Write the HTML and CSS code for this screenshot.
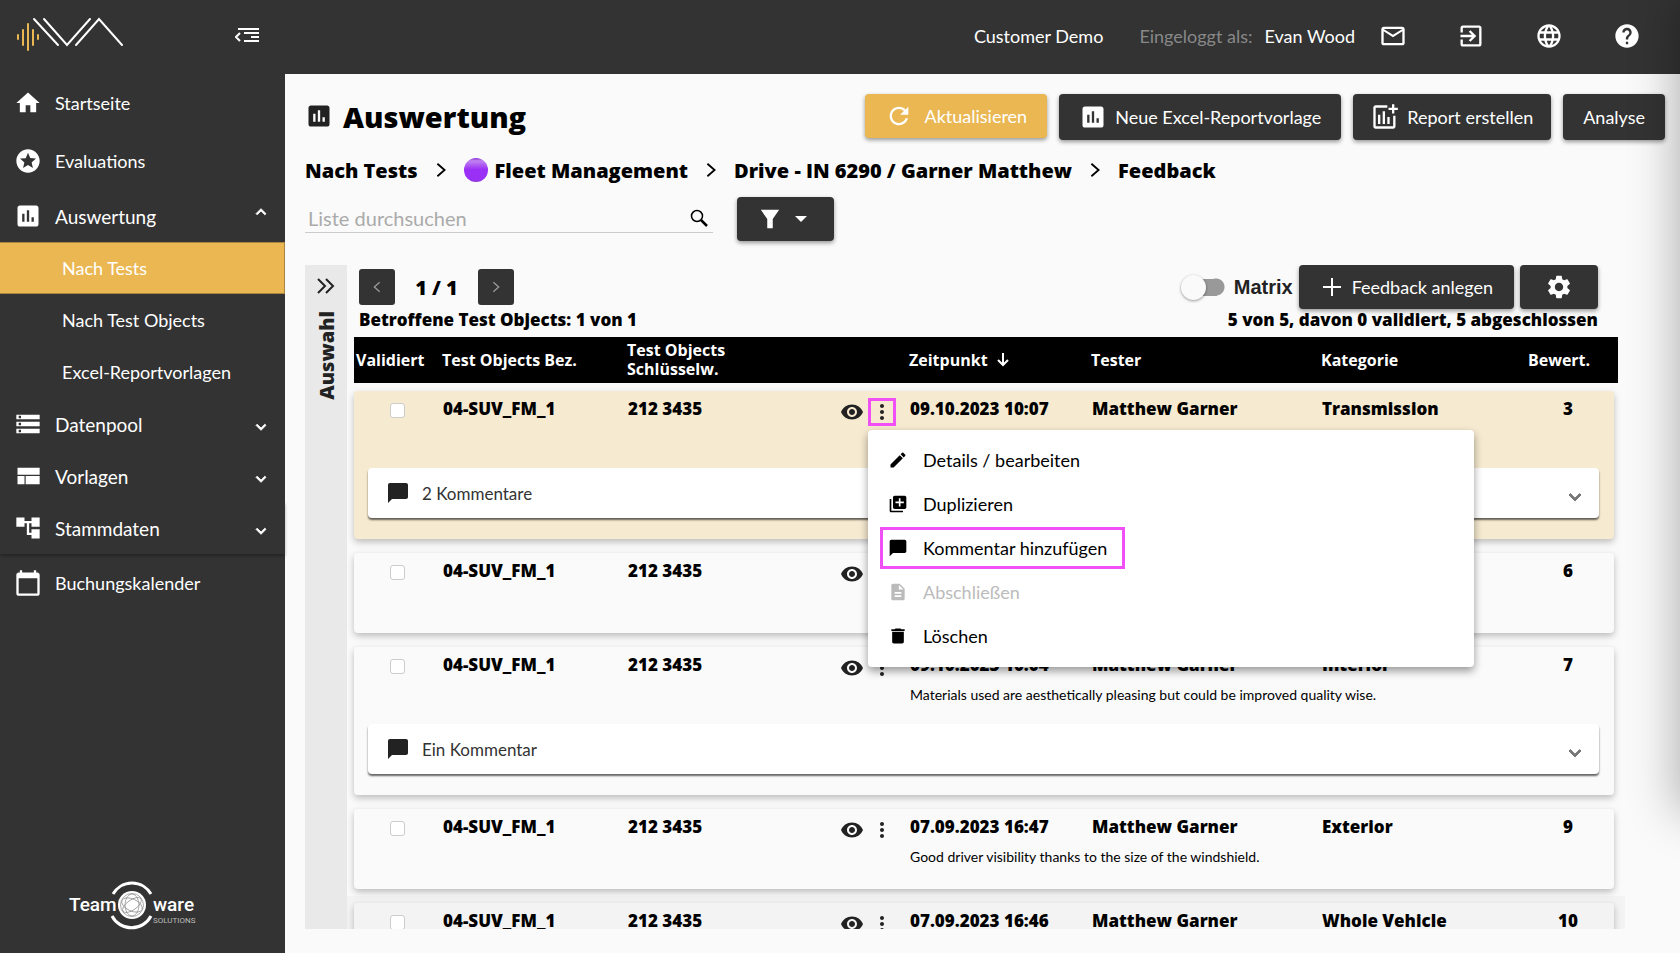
FILE: index.html
```html
<!DOCTYPE html>
<html lang="de">
<head>
<meta charset="utf-8">
<title>Auswertung</title>
<link rel="stylesheet" href="styles.css">
</head>
<body>
<svg class="sprite" aria-hidden="true">
  <symbol id="i-chart" viewBox="0 0 24 24"><path d="M19 3H5c-1.1 0-2 .9-2 2v14c0 1.1.9 2 2 2h14c1.1 0 2-.9 2-2V5c0-1.1-.9-2-2-2zM9 17H7v-7h2v7zm4 0h-2V7h2v10zm4 0h-2v-4h2v4z"/></symbol>
  <symbol id="i-down" viewBox="0 0 24 24"><path d="M7.41 8.59 12 13.17l4.59-4.58L18 10l-6 6-6-6z"/></symbol>
  <symbol id="i-chev" viewBox="0 0 12 20"><path d="M2 3l8 7-8 7" fill="none" stroke="currentColor" stroke-width="2"/></symbol>
  <symbol id="i-comment" viewBox="0 0 24 24"><path d="M20 2H4c-1.1 0-2 .9-2 2v18l4-4h14c1.1 0 2-.9 2-2V4c0-1.1-.9-2-2-2z"/></symbol>
  <symbol id="i-eye" viewBox="0 0 24 24"><path d="M12 4.500C7 4.500 2.730 7.610 1 12c1.730 4.390 6 7.500 11 7.500s9.270-3.110 11-7.500c-1.730-4.390-6-7.500-11-7.500zM12 17c-2.760 0-5-2.240-5-5s2.240-5 5-5 5 2.240 5 5-2.240 5-5 5zm0-8c-1.660 0-3 1.340-3 3s1.340 3 3 3 3-1.340 3-3-1.340-3-3-3z"/></symbol>
  <symbol id="i-more" viewBox="0 0 24 24"><path d="M12 8c1.100 0 2-.9 2-2s-.9-2-2-2-2 .9-2 2 .9 2 2 2zm0 2c-1.100 0-2 .9-2 2s.9 2 2 2 2-.9 2-2-.9-2-2-2zm0 6c-1.100 0-2 .9-2 2s.9 2 2 2 2-.9 2-2-.9-2-2-2z"/></symbol>
</svg>
<div class="app">
  <aside class="sidebar">
    <div class="brand">
      <svg class="brand-logo" viewBox="0 0 110 38" role="img" aria-label="Logo">
        <g fill="none" stroke-width="2" stroke-linecap="round">
          <path stroke="#eab753" d="M2 19v4M7 14v15M12 8v26M17 14v15M22 19v4"/>
          <path stroke="#fff" d="M18 3l24 26M28 3l23 26L74 3M60 29L83 3l23 26"/>
        </g>
      </svg>
      <button class="plain collapse" aria-label="Menü einklappen"><svg viewBox="0 0 24 16"><g fill="none" stroke="#fff" stroke-width="2"><path d="M3 2h21M9 6h15M16 10h8M9 14h15M5 6L1 10l4 4"/></g></svg></button>
    </div>
    <nav class="nav">
      <a class="item tall" href="#"><svg viewBox="0 0 24 24"><path d="M10 20v-6h4v6h5v-8h3L12 3 2 12h3v8z"/></svg>Startseite</a>
      <a class="item tall" href="#"><svg viewBox="0 0 24 24"><path d="M11.990 2C6.470 2 2 6.480 2 12s4.470 10 9.990 10C17.520 22 22 17.520 22 12S17.520 2 11.990 2zm4.240 16L12 15.450 7.770 18l1.120-4.810-3.730-3.230 4.920-.42L12 5l1.920 4.530 4.920.42-3.730 3.230L16.230 18z"/></svg>Evaluations</a>
      <a class="item group" href="#"><svg><use href="#i-chart"/></svg>Auswertung<svg class="arrow up"><use href="#i-down"/></svg></a>
      <a class="sub active" href="#">Nach Tests</a>
      <a class="sub" href="#">Nach Test Objects</a>
      <a class="sub" href="#">Excel-Reportvorlagen</a>
      <a class="item group" href="#"><svg viewBox="0 0 24 24"><path d="M2 20h20v-4H2v4zm2-3h2v2H4v-2zM2 4v4h20V4H2zm4 3H4V5h2v2zm-4 7h20v-4H2v4zm2-3h2v2H4v-2z"/></svg>Datenpool<svg class="arrow"><use href="#i-down"/></svg></a>
      <a class="item group" href="#"><svg viewBox="0 0 24 24"><path d="M3 19h6v-7H3v7zm7 0h12v-7H10v7zM3 5v6h19V5H3z"/></svg>Vorlagen<svg class="arrow"><use href="#i-down"/></svg></a>
      <a class="item group last" href="#"><svg viewBox="0 0 24 24"><path d="M22 11V3h-7v3H9V3H2v8h7V8h2v10h4v3h7v-8h-7v3h-2V8h2v3z"/></svg>Stammdaten<svg class="arrow"><use href="#i-down"/></svg></a>
      <a class="item tall" href="#"><svg viewBox="0 0 24 24"><path d="M20 3h-1V1h-2v2H7V1H5v2H4c-1.100 0-2 .9-2 2v16c0 1.100.9 2 2 2h16c1.100 0 2-.9 2-2V5c0-1.100-.9-2-2-2zm0 18H4V8h16v13z"/></svg>Buchungskalender</a>
    </nav>
    <svg class="company" viewBox="0 0 128 50" role="img" aria-label="Team ware Solutions">
      <text class="co-name" x="1" y="31">Team</text>
      <text class="co-name" x="85" y="31">ware</text>
      <text class="co-sub" x="85" y="43">SOLUTIONS</text>
      <g fill="none" stroke="#fff" stroke-width="3"><path d="M45 14a22 22 0 0 1 38 0M44 36a22 22 0 0 0 39 0"/></g>
      <circle cx="64" cy="25" r="14" fill="#fff"/>
      <g fill="none" stroke="#888" stroke-width=".7"><circle cx="64" cy="25" r="11.500"/><ellipse cx="64" cy="25" rx="11" ry="5" transform="rotate(-35 64 25)"/><ellipse cx="64" cy="25" rx="11" ry="6" transform="rotate(25 64 25)"/><ellipse cx="64" cy="25" rx="11" ry="7" transform="rotate(90 64 25)"/></g>
    </svg>
  </aside>

  <div class="page">
    <header class="topbar">
      <span class="customer">Customer Demo</span>
      <span class="login-label">Eingeloggt als:</span>
      <span class="user">Evan Wood</span>
      <div class="top-icons">
        <button class="plain" aria-label="Nachrichten"><svg viewBox="0 0 24 24"><path d="M20 4H4c-1.100 0-2 .9-2 2v12c0 1.100.9 2 2 2h16c1.100 0 2-.9 2-2V6c0-1.100-.9-2-2-2zm0 14H4V8l8 5 8-5v10zm-8-7L4 6h16l-8 5z"/></svg></button>
        <button class="plain" aria-label="Abmelden"><svg viewBox="0 0 24 24"><path d="M10.090 15.590L11.500 17l5-5-5-5-1.410 1.410L12.670 11H3v2h9.670l-2.580 2.590zM19 3H5c-1.110 0-2 .9-2 2v4h2V5h14v14H5v-4H3v4c0 1.100.89 2 2 2h14c1.100 0 2-.9 2-2V5c0-1.100-.9-2-2-2z"/></svg></button>
        <button class="plain" aria-label="Sprache"><svg viewBox="0 0 24 24"><path d="M11.990 2C6.470 2 2 6.480 2 12s4.470 10 9.990 10C17.520 22 22 17.520 22 12S17.520 2 11.990 2zm6.930 6h-2.950c-.32-1.250-.78-2.450-1.380-3.560 1.840.63 3.370 1.910 4.330 3.560zM12 4.040c.83 1.200 1.480 2.530 1.910 3.960h-3.820c.43-1.430 1.080-2.760 1.910-3.960zM4.260 14C4.100 13.360 4 12.690 4 12s.1-1.360.26-2h3.380c-.08.66-.14 1.320-.14 2s.06 1.340.14 2H4.260zm.82 2h2.950c.32 1.250.78 2.450 1.380 3.560-1.840-.63-3.370-1.900-4.330-3.560zm2.950-8H5.080c.96-1.660 2.490-2.930 4.330-3.560C8.810 5.550 8.350 6.750 8.030 8zM12 19.960c-.83-1.200-1.480-2.530-1.910-3.960h3.820c-.43 1.430-1.080 2.760-1.910 3.960zM14.340 14H9.660c-.09-.66-.16-1.320-.16-2s.07-1.350.16-2h4.680c.09.65.16 1.320.16 2s-.07 1.340-.16 2zm.25 5.560c.6-1.110 1.060-2.310 1.380-3.560h2.950c-.96 1.650-2.490 2.930-4.330 3.560zM16.360 14c.08-.66.14-1.320.14-2s-.06-1.340-.14-2h3.380c.16.64.26 1.310.26 2s-.1 1.360-.26 2h-3.380z"/></svg></button>
        <button class="plain" aria-label="Hilfe"><svg viewBox="0 0 24 24"><path d="M12 2C6.480 2 2 6.480 2 12s4.480 10 10 10 10-4.480 10-10S17.520 2 12 2zm1 17h-2v-2h2v2zm2.070-7.750l-.9.920C13.450 12.900 13 13.500 13 15h-2v-.5c0-1.100.45-2.100 1.170-2.830l1.240-1.260c.37-.36.59-.86.59-1.410 0-1.100-.9-2-2-2s-2 .9-2 2H8c0-2.210 1.790-4 4-4s4 1.790 4 4c0 .88-.36 1.680-.93 2.250z"/></svg></button>
      </div>
    </header>

    <main class="main">
      <div class="title-row">
        <h1><svg><use href="#i-chart"/></svg>Auswertung</h1>
        <div class="actions">
          <button class="btn gold"><svg viewBox="0 0 24 24"><path d="M17.650 6.350C16.200 4.900 14.210 4 12 4c-4.420 0-7.990 3.580-7.990 8s3.570 8 7.990 8c3.730 0 6.840-2.550 7.730-6h-2.080c-.82 2.330-3.040 4-5.650 4-3.310 0-6-2.690-6-6s2.690-6 6-6c1.660 0 3.140.69 4.220 1.780L13 11h7V4l-2.350 2.350z"/></svg>Aktualisieren</button>
          <button class="btn"><svg><use href="#i-chart"/></svg>Neue Excel-Reportvorlage</button>
          <button class="btn tight"><svg viewBox="0 0 24 24"><path d="M14 2H4c-1.100 0-2 .9-2 2v16c0 1.100.9 2 2 2h15c1.100 0 2-.9 2-2v-9h-2v9H4V4h10V2zM6 10h2v8H6zm4-3h2v11h-2zm4 5h2v6h-2zM18 1h2v3h3v2h-3v3h-2V6h-3V4h3z"/></svg>Report erstellen</button>
          <button class="btn">Analyse</button>
        </div>
      </div>

      <nav class="crumbs" aria-label="Pfad">
        <a href="#">Nach Tests</a>
        <svg><use href="#i-chev"/></svg>
        <a href="#" class="with-dot"><span class="dot"></span>Fleet Management</a>
        <svg><use href="#i-chev"/></svg>
        <a href="#">Drive - IN 6290 / Garner Matthew</a>
        <svg><use href="#i-chev"/></svg>
        <a href="#">Feedback</a>
      </nav>

      <div class="search-row">
        <div class="search">
          <input type="search" placeholder="Liste durchsuchen" aria-label="Liste durchsuchen">
          <svg viewBox="0 0 18 18"><circle cx="7" cy="7" r="5.500" fill="none" stroke="#000" stroke-width="1.500"/><path d="M11 11l6 6" stroke="#000" stroke-width="2.500"/></svg>
        </div>
        <button class="btn filter" aria-label="Filter"><svg viewBox="0 0 24 24"><path d="M2 2h20l-7 10v10H9V12z"/></svg><svg class="caret" viewBox="0 0 24 24"><path d="M6 9l6 6 6-6z"/></svg></button>
      </div>

      <div class="workspace">
        <button class="drawer"><svg viewBox="0 0 18 16"><path d="M1 1l7 7-7 7M9 1l7 7-7 7" fill="none" stroke="#222" stroke-width="2"/></svg><span>Auswahl</span></button>
        <section class="content">
          <div class="toolbar">
            <div class="pager">
              <button aria-label="Zurück"><svg class="flip"><use href="#i-chev"/></svg></button>
              <span>1 / 1</span>
              <button aria-label="Weiter"><svg><use href="#i-chev"/></svg></button>
            </div>
            <div class="tools">
              <label class="toggle"><input type="checkbox" role="switch">Matrix</label>
              <button class="btn add"><svg viewBox="0 0 24 24"><path d="M11 3h2v8h8v2h-8v8h-2v-8H3v-2h8z"/></svg>Feedback anlegen</button>
              <button class="btn gear" aria-label="Einstellungen"><svg viewBox="0 0 24 24"><path d="M19.140 12.940c.04-.3.060-.61.060-.94 0-.32-.02-.64-.07-.94l2.030-1.580c.18-.14.230-.41.120-.61l-1.920-3.320c-.12-.22-.37-.29-.59-.22l-2.390.96c-.5-.38-1.030-.7-1.620-.94l-.36-2.540c-.04-.24-.24-.41-.48-.41h-3.840c-.24 0-.43.170-.47.410l-.36 2.540c-.59.240-1.130.57-1.620.94l-2.390-.96c-.22-.08-.47 0-.59.220L2.740 8.870c-.12.210-.08.470.12.610l2.030 1.580c-.05.300-.09.630-.09.940s.02.640.07.940l-2.030 1.580c-.18.140-.23.410-.12.610l1.920 3.320c.12.220.37.290.59.220l2.390-.96c.5.380 1.030.7 1.620.94l.36 2.540c.05.240.24.410.48.410h3.840c.24 0 .44-.17.470-.41l.36-2.540c.59-.24 1.130-.56 1.620-.94l2.390.96c.22.080.47 0 .59-.22l1.920-3.320c.12-.22.070-.47-.12-.61l-2.010-1.580zM12 15.600c-1.980 0-3.600-1.620-3.600-3.600s1.620-3.600 3.600-3.600 3.600 1.620 3.600 3.600-1.620 3.600-3.600 3.600z"/></svg></button>
            </div>
          </div>
          <div class="summary"><span>Betroffene Test Objects: 1 von 1</span><span>5 von 5, davon 0 validiert, 5 abgeschlossen</span></div>

          <table class="list">
            <thead>
              <tr><th>Validiert</th><th>Test Objects Bez.</th><th>Test Objects Schlüsselw.</th><th></th><th>Zeitpunkt<svg viewBox="0 0 12 14"><path d="M6 0v12M1 7l5 5 5-5" fill="none" stroke="#fff" stroke-width="2"/></svg></th><th>Tester</th><th>Kategorie</th><th class="rate">Bewert.</th></tr>
            </thead>
            <tbody class="selected">
              <tr>
                <td class="check"><input type="checkbox" aria-label="Validiert"></td><td>04-SUV_FM_1</td><td>212 3435</td>
                <td class="row-actions">
                  <button class="plain" aria-label="Ansehen"><svg><use href="#i-eye"/></svg></button><button class="plain marked" aria-label="Mehr"><svg><use href="#i-more"/></svg></button>
                  <div class="menu" role="menu">
                    <button role="menuitem"><svg viewBox="0 0 24 24"><path d="M3 17.250V21h3.750L17.810 9.940l-3.750-3.750L3 17.250zM20.710 7.040c.39-.39.39-1.020 0-1.410l-2.340-2.340c-.39-.39-1.020-.39-1.410 0l-1.830 1.830 3.750 3.750 1.830-1.830z"/></svg>Details / bearbeiten</button>
                    <button role="menuitem"><svg viewBox="0 0 24 24"><path d="M4 6H2v14c0 1.100.9 2 2 2h14v-2H4V6zm16-4H8c-1.100 0-2 .9-2 2v12c0 1.100.9 2 2 2h12c1.100 0 2-.9 2-2V4c0-1.100-.9-2-2-2zm-1 9h-4v4h-2v-4H9V9h4V5h2v4h4v2z"/></svg>Duplizieren</button>
                    <button role="menuitem" class="marked-item"><svg><use href="#i-comment"/></svg>Kommentar hinzufügen</button>
                    <button role="menuitem" disabled><svg viewBox="0 0 24 24"><path d="M14 2H6c-1.100 0-2 .9-2 2v16c0 1.100.89 2 2 2h12c1.100 0 2-.9 2-2V8l-6-6zm2 16H8v-2h8v2zm0-4H8v-2h8v2zm-3-5V3.500L18.500 9H13z"/></svg>Abschließen</button>
                    <button role="menuitem"><svg viewBox="0 0 24 24"><path d="M5 7h14v12c0 1.100-.9 2-2 2H7c-1.100 0-2-.9-2-2V7zM20 4h-4l-1-1H9L8 4H4v2h16V4z"/></svg>Löschen</button>
                  </div>
                </td>
                <td>09.10.2023 10:07</td><td>Matthew Garner</td><td>Transmission</td><td class="score">3</td>
              </tr>
              <tr class="comments"><td colspan="8"><button class="panel"><svg><use href="#i-comment"/></svg>2 Kommentare<svg class="open"><use href="#i-down"/></svg></button></td></tr>
            </tbody>
            <tbody>
              <tr>
                <td class="check"><input type="checkbox" aria-label="Validiert"></td><td>04-SUV_FM_1</td><td>212 3435</td>
                <td class="row-actions"><button class="plain" aria-label="Ansehen"><svg><use href="#i-eye"/></svg></button><button class="plain" aria-label="Mehr"><svg><use href="#i-more"/></svg></button></td>
                <td></td><td></td><td></td><td class="score">6</td>
              </tr>
            </tbody>
            <tbody>
              <tr>
                <td class="check"><input type="checkbox" aria-label="Validiert"></td><td>04-SUV_FM_1</td><td>212 3435</td>
                <td class="row-actions"><button class="plain" aria-label="Ansehen"><svg><use href="#i-eye"/></svg></button><button class="plain" aria-label="Mehr"><svg><use href="#i-more"/></svg></button></td>
                <td>09.10.2023 10:04<p>Materials used are aesthetically pleasing but could be improved quality wise.</p></td><td>Matthew Garner</td><td>Interior</td><td class="score">7</td>
              </tr>
              <tr class="comments"><td colspan="8"><button class="panel"><svg><use href="#i-comment"/></svg>Ein Kommentar<svg class="open"><use href="#i-down"/></svg></button></td></tr>
            </tbody>
            <tbody>
              <tr>
                <td class="check"><input type="checkbox" aria-label="Validiert"></td><td>04-SUV_FM_1</td><td>212 3435</td>
                <td class="row-actions"><button class="plain" aria-label="Ansehen"><svg><use href="#i-eye"/></svg></button><button class="plain" aria-label="Mehr"><svg><use href="#i-more"/></svg></button></td>
                <td>07.09.2023 16:47<p>Good driver visibility thanks to the size of the windshield.</p></td><td>Matthew Garner</td><td>Exterior</td><td class="score">9</td>
              </tr>
            </tbody>
            <tbody class="shaded">
              <tr>
                <td class="check"><input type="checkbox" aria-label="Validiert"></td><td>04-SUV_FM_1</td><td>212 3435</td>
                <td class="row-actions"><button class="plain" aria-label="Ansehen"><svg><use href="#i-eye"/></svg></button><button class="plain" aria-label="Mehr"><svg><use href="#i-more"/></svg></button></td>
                <td>07.09.2023 16:46</td><td>Matthew Garner</td><td>Whole Vehicle</td><td class="score">10</td>
              </tr>
            </tbody>
          </table>
        </section>
      </div>
    </main>
  </div>
  <div class="side-sheet" aria-hidden="true"></div>
</div>
</body>
</html>
```
FILE: styles.css
```css
* { box-sizing: border-box; }
body {
  margin: 0;
  font-family: Lato, "Open Sans", sans-serif;
  font-size: 18px;
  color: #000;
  background: #fafafa;
}
svg { fill: currentColor; flex: none; }
a { color: inherit; text-decoration: none; }
button, input { font: inherit; color: inherit; }
button { border: 0; padding: 0; background: none; }
.sprite { position: absolute; width: 0; height: 0; }
.plain { display: flex; }

.app {
  position: relative;
  display: grid;
  grid-template-columns: 285px 1fr;
  height: 100vh;
  overflow: hidden;
}

/* Sidebar */
.sidebar {
  display: flex;
  flex-direction: column;
  background: #333;
  color: #fff;
}
.brand {
  display: flex;
  align-items: center;
  justify-content: space-between;
  height: 74px;
  padding: 0 26px 4px 16px;
}
.brand-logo { width: 110px; height: 38px; }
.collapse svg { width: 24px; height: 16px; }
.item, .sub {
  display: flex;
  align-items: center;
  height: 52px;
}
.item { padding: 0 14px; gap: 13px; }
.item.group { font-size: 19px; }
.item.tall { height: 58px; }
.item > svg { width: 28px; height: 28px; }
.item > .arrow { width: 20px; height: 20px; margin: 6px 0 0 auto; stroke: #fff; }
.item > .arrow.up { margin: 0 0 8px auto; transform: rotate(180deg); }
.item.last { box-shadow: 0 2px 3px rgba(0, 0, 0, .3); }
.sub { padding-left: 62px; }
.sub.active { background: #eab753; border: 1px solid #a98640; border-left: 0; }
.company { width: 128px; height: 50px; margin: auto 0 23px 68px; }
.co-name { font: 500 19px "Liberation Sans Narrow", Roboto, sans-serif; fill: #fff; }
.co-sub { font: 8px "Liberation Sans Narrow", Roboto, sans-serif; fill: #bbb; }

/* Top bar */
.page { display: flex; flex-direction: column; min-width: 0; min-height: 0; }
.topbar {
  display: flex;
  align-items: center;
  justify-content: flex-end;
  height: 74px;
  padding: 0 39px 2px 0;
  background: #333;
  color: #fff;
}
.customer { margin-right: 36px; }
.login-label { margin-right: 12px; color: #888; }
.user { margin-right: 24px; }
.top-icons { display: flex; gap: 50px; }
.top-icons svg { width: 28px; height: 28px; }

/* Page head */
.main {
  display: flex;
  flex: 1;
  flex-direction: column;
  min-height: 0;
  padding: 20px 15px 24px 20px;
}
.title-row { display: flex; justify-content: space-between; height: 46px; }
h1 {
  display: flex;
  align-items: center;
  gap: 10px;
  height: 44px;
  margin: 0;
  font: 800 29px "Open Sans", sans-serif;
}
h1 svg { width: 28px; height: 28px; color: #222; }
.actions { display: flex; align-items: flex-start; gap: 12px; }
.btn {
  display: flex;
  align-items: center;
  justify-content: center;
  gap: 8px;
  height: 46px;
  padding: 0 20px;
  border-radius: 4px;
  background: #333;
  color: #fff;
  box-shadow: 0 2px 4px rgba(0, 0, 0, .4);
}
.btn svg { width: 28px; height: 28px; }
.btn.gold { height: 44px; gap: 12px; background: #eab753; }
.btn.tight { padding: 0 18px; }

.crumbs {
  display: flex;
  align-items: center;
  gap: 17px;
  height: 24px;
  margin-top: 18px;
  font: 800 20px "Open Sans", sans-serif;
}
.crumbs svg { width: 12px; height: 18px; }
.with-dot { display: flex; align-items: center; gap: 7px; }
.dot {
  width: 24px;
  height: 24px;
  border-radius: 50%;
  background: linear-gradient(#8a2fd6, #c184f0 12%, #9a30f5 48%, #9a30f5 90%, #8a3fd0);
}

.search-row { display: flex; align-items: flex-start; gap: 24px; margin-top: 15px; }
.search {
  display: flex;
  align-items: center;
  width: 408px;
  height: 36px;
  padding: 6px 5px 0 3px;
  border-bottom: 1px solid #ccc;
}
.search input { flex: 1; min-width: 0; padding: 0; border: 0; outline: 0; background: none; font-size: 20px; }
.search input::placeholder { color: #aaa; }
.search svg { width: 18px; height: 18px; }
.btn.filter { width: 97px; height: 44px; }
.btn.filter svg { width: 22px; height: 22px; }
.btn.filter .caret { width: 24px; height: 24px; }

/* Workspace */
.workspace { display: flex; flex: 1; min-height: 0; margin-top: 24px; padding-right: 40px; }
.drawer {
  display: flex;
  flex-direction: column;
  align-items: center;
  width: 42px;
  padding-top: 13px;
  gap: 17px;
  background: #e9e9e9;
}
.drawer svg { width: 18px; height: 16px; }
.drawer span {
  writing-mode: vertical-rl;
  transform: rotate(180deg);
  font: 800 20px "Open Sans", sans-serif;
  color: #222;
}
.content { flex: 1; min-width: 0; overflow: hidden; padding: 0 7px; }
.toolbar, .summary { display: flex; justify-content: space-between; padding: 0 20px 0 5px; }
.toolbar { align-items: center; height: 44px; }
.pager { display: flex; align-items: center; font: 800 20px "Open Sans", sans-serif; }
.pager span { width: 83px; text-align: center; }
.pager button {
  display: flex;
  align-items: center;
  justify-content: center;
  width: 36px;
  height: 36px;
  border-radius: 3px;
  background: #333;
  color: #999;
}
.pager svg { width: 8px; height: 14px; }
.flip { transform: scaleX(-1); }
.tools { display: flex; align-items: center; gap: 6px; }
.toggle { display: flex; align-items: center; gap: 9px; font: 700 20px "Liberation Sans", sans-serif; color: #222; }
.toggle input {
  display: flex;
  align-items: center;
  appearance: none;
  width: 44px;
  height: 25px;
  margin: 0;
  background: linear-gradient(#999, #999) no-repeat 8px 4px / 28px 17px, radial-gradient(circle at 35px 12px, #999 8px, transparent 9px);
}
.toggle input::before {
  content: "";
  width: 25px;
  height: 25px;
  border-radius: 50%;
  background: #fafafa;
  box-shadow: 0 1px 3px rgba(0, 0, 0, .4);
}
.btn.add, .btn.gear { height: 44px; }
.btn.add svg { width: 24px; height: 24px; }
.btn.add { padding: 0 21px; }
.btn.gear { width: 78px; }
.summary { height: 28px; font: 800 17px/22px "Open Sans", sans-serif; }

/* Result list */
.list { display: block; font: 800 17px/20px "Open Sans", sans-serif; }
.list thead, .list tbody { display: block; }
.list tr {
  display: grid;
  grid-template-columns: 88px 185fr 209fr 73px 182fr 230fr 201fr 92px;
}
.list th, .list td { padding: 0; text-align: left; }
.list thead { padding-right: 4px; background: #000; color: #fff; }
.list thead tr { align-items: center; height: 46px; font-size: 16px; line-height: 19px; }
.list th:first-child { padding-left: 2px; }
.list th:nth-child(3) { padding-right: 70px; }
.list th svg { width: 12px; height: 14px; margin-left: 9px; vertical-align: -1px; }
.list th.rate { padding-left: 6px; }
.list tbody {
  position: relative;
  min-height: 80px;
  margin: 14px 4px 0 0;
  border-radius: 4px;
  background: #fafafa;
  box-shadow: 0 3px 7px rgba(0, 0, 0, .25);
}
.list thead + tbody { margin-top: 8px; background: #f6ead0; }
.list tbody.shaded { background: #f3f3f3; }
.shaded::before {
  content: "";
  position: absolute;
  inset: -7px -11px 0 -7px;
  z-index: -1;
  background: #f3f3f3;
}
.list td { padding: 8px 0 0 1px; white-space: nowrap; }
.list td p { margin: 10px 0 0; font: 14px/20px Lato, sans-serif; width: 0; }
.list td.score { padding-left: 0; text-align: center; }
.list td.check { padding: 12px 0 0 36px; }
.check input {
  display: block;
  appearance: none;
  width: 15px;
  height: 15px;
  margin: 0;
  border: 1px solid #ccc;
  border-radius: 3px;
  background: #fff;
}
.list td.row-actions { position: relative; display: flex; align-items: flex-start; gap: 2px; padding: 7px 0 0 2px; }
.row-actions > .plain { align-items: center; justify-content: center; width: 28px; height: 28px; color: #222; }
.row-actions > .plain svg { width: 24px; height: 24px; }
.row-actions > .marked { outline: 3px solid #f050f5; outline-offset: -3px; }

.list tr.comments { display: block; }
.list .comments td { display: block; padding: 0 15px 21px 14px; }
.list tr:has(+ .comments) { min-height: 77px; }
.panel {
  display: flex;
  align-items: center;
  gap: 12px;
  width: 100%;
  height: 50px;
  padding: 0 12px 0 18px;
  border-radius: 4px;
  background: #fff;
  color: #333;
  font: 17px Lato, sans-serif;
  box-shadow: 0 2px 2px rgba(0, 0, 0, .6);
}
.panel svg { width: 24px; height: 24px; color: #222; }
.panel .open { margin: 7px 0 0 auto; color: #777; stroke: #777; }

.menu {
  position: absolute;
  top: 39px;
  left: 32px;
  z-index: 10;
  width: 606px;
  padding: 8px 12px 9px;
  border-radius: 4px;
  background: #fff;
  box-shadow: 0 4px 8px rgba(0, 0, 0, .4);
}
.menu button {
  display: flex;
  align-items: center;
  gap: 15px;
  height: 44px;
  padding: 0 18px 0 8px;
  font: 18px Lato, sans-serif;
}
.menu svg { width: 20px; height: 20px; }
.menu button:disabled { color: #bbb; }
.menu .marked-item { height: 42px; margin: 1px 0; outline: 3px solid #f050f5; outline-offset: -3px; }

/* Closed sheet parked beyond the right edge; only its shadow is visible */
.side-sheet {
  position: absolute;
  top: 0;
  left: 100%;
  width: 300px;
  height: 810px;
  box-shadow: 0 0 45px 3px rgba(0, 0, 0, .3);
}
```
